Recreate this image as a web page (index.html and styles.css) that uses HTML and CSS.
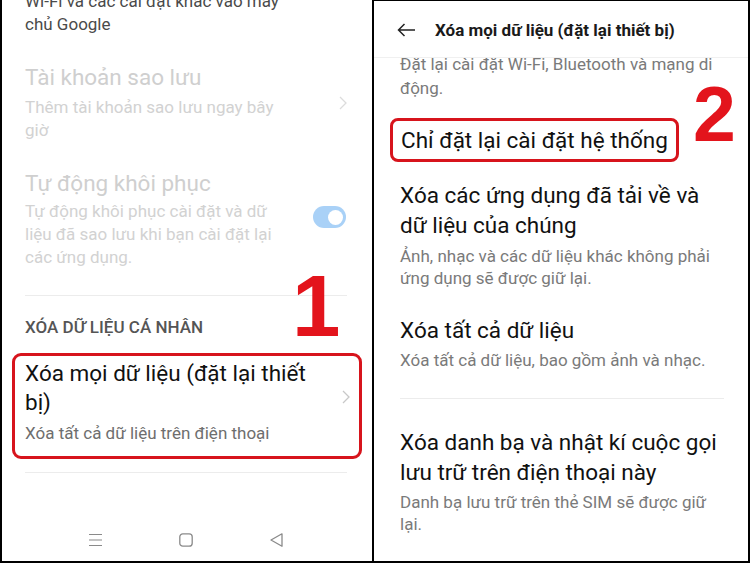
FILE: index.html
```html
<!DOCTYPE html>
<html lang="vi">
<head>
<meta charset="utf-8">
<link rel="stylesheet" href="styles.css">
</head>
<body>
<div class="screen">
  <section class="panel left">
    <p class="cut">Wi-Fi và các cài đặt khác vào máy<br>chủ Google</p>

    <div class="item disabled first">
      <div class="text">
        <div class="title">Tài khoản sao lưu</div>
        <div class="sub">Thêm tài khoản sao lưu ngay bây<br>giờ</div>
      </div>
      <svg class="chev" width="8" height="14" viewBox="0 0 8 14"><path d="M1 1 L7 7 L1 13" fill="none" stroke="#dcdcdc" stroke-width="1.3"/></svg>
    </div>

    <div class="item disabled second">
      <div class="text">
        <div class="title">Tự động khôi phục</div>
        <div class="sub">Tự động khôi phục cài đặt và dữ<br>liệu đã sao lưu khi bạn cài đặt lại<br>các ứng dụng.</div>
      </div>
      <div class="toggle"><span class="knob"></span></div>
    </div>

    <hr class="divider d1">
    <div class="section-head">XÓA DỮ LIỆU CÁ NHÂN</div>

    <div class="item boxed">
      <div class="text">
        <div class="title">Xóa mọi dữ liệu (đặt lại thiết<br>bị)</div>
        <div class="sub">Xóa tất cả dữ liệu trên điện thoại</div>
      </div>
      <svg class="chev" width="8" height="14" viewBox="0 0 8 14"><path d="M1 1 L7 7 L1 13" fill="none" stroke="#c8c8c8" stroke-width="1.3"/></svg>
    </div>
    <hr class="divider d2">

    <nav class="navbar">
      <svg width="13" height="14" viewBox="0 0 13 14"><path d="M0 1.5H13M0 7H13M0 12.5H13" stroke="#8a8a8a" stroke-width="1.2"/></svg>
      <svg width="14" height="14" viewBox="0 0 14 14"><rect x="0.8" y="0.8" width="12.4" height="12.4" rx="3" fill="none" stroke="#8a8a8a" stroke-width="1.3"/></svg>
      <svg width="13" height="14" viewBox="0 0 13 14"><path d="M12 0.8 L1 7 L12 13.2 Z" fill="none" stroke="#8a8a8a" stroke-width="1.3" stroke-linejoin="round"/></svg>
    </nav>

    <span class="step step1">1</span>
  </section>

  <section class="panel right">
    <header class="appbar">
      <svg class="back" width="19" height="14" viewBox="0 0 19 14"><path d="M18 7H1.5M7.5 1L1.5 7L7.5 13" fill="none" stroke="#222" stroke-width="1.5"/></svg>
      <h1>Xóa mọi dữ liệu (đặt lại thiết bị)</h1>
    </header>
    <div class="body">
      <p class="r-cut">Đặt lại cài đặt Wi-Fi, Bluetooth và mạng di<br>động.</p>

      <div class="ritem ritem-box">
        <span class="rtitle boxtitle">Chỉ đặt lại cài đặt hệ thống</span>
      </div>

      <div class="ritem r2">
        <div class="rtitle">Xóa các ứng dụng đã tải về và<br>dữ liệu của chúng</div>
        <div class="rsub">Ảnh, nhạc và các dữ liệu khác không phải<br>ứng dụng sẽ được giữ lại.</div>
      </div>

      <div class="ritem r3">
        <div class="rtitle">Xóa tất cả dữ liệu</div>
        <div class="rsub">Xóa tất cả dữ liệu, bao gồm ảnh và nhạc.</div>
      </div>

      <hr class="rdivider">

      <div class="ritem r4">
        <div class="rtitle">Xóa danh bạ và nhật kí cuộc gọi<br>lưu trữ trên điện thoại này</div>
        <div class="rsub">Danh bạ lưu trữ trên thẻ SIM sẽ được giữ<br>lại.</div>
      </div>
    </div>
    <span class="step step2">2</span>
  </section>
</div>
</body>
</html>
```

FILE: styles.css
```css
* { box-sizing: border-box; }
html, body { margin: 0; padding: 0; background: #fff; }
body { font-family: Roboto, "Noto Sans", "Liberation Sans", sans-serif; }

.screen {
  display: flex;
  width: 750px;
  height: 563px;
  border-bottom: 2px solid #000;
  overflow: hidden;
}

.panel { position: relative; height: 100%; overflow: hidden; }
.left {
  width: 374px;
  border-left: 2px solid #000;
  border-right: 2px solid #000;
  padding: 0 23px 0 23px;
  display: flex;
  flex-direction: column;
}
.right {
  flex: 1;
  border-top: 1px solid #000;
  border-right: 2px solid #000;
  display: flex;
  flex-direction: column;
}

p { margin: 0; }

/* left panel */
.cut {
  margin-top: -10px;
  font-size: 17px;
  line-height: 23px;
  color: #4a4a4a;
}
.item { display: flex; align-items: center; }
.item .text { flex: 1; white-space: nowrap; }
.item .title { font-size: 22.5px; line-height: 28px; color: #1a1a1a; }
.item .sub { font-size: 17px; line-height: 23px; color: #777; margin-top: 5px; }
.item.disabled .title { color: #cfcfcf; }
.item.disabled .sub { color: #d2d2d2; }
.item.first { margin-top: 27px; }
.item.second { margin-top: 27px; }
.item.second .sub { margin-top: 3px; }
.chev { flex: none; margin-right: 2px; }

.toggle {
  flex: none;
  width: 33px;
  height: 22px;
  border-radius: 11px;
  background: #a9d1f7;
  display: flex;
  align-items: center;
  justify-content: flex-end;
  padding-right: 3px;
  margin-right: 3px;
  margin-bottom: 4px;
}
.knob { width: 15px; height: 15px; border-radius: 50%; background: #fff; }

.divider { border: 0; border-top: 1px solid #ececec; margin: 0 2px 0 0; height: 0; }
.d1 { margin-top: 26px; }
.section-head {
  margin-top: 21px;
  font-size: 17px;
  line-height: 20px;
  font-weight: 500;
  color: #555;
}

.item.boxed {
  margin: 16px -13px 0 -13px;
  border: 3px solid #d7141c;
  border-radius: 9px;
  padding: 3px 7px 11px 10px;
}
.item.boxed .sub { margin-top: 5px; color: #6e6e6e; }
.item.boxed .title { line-height: 29px; color: #111; }
.item.boxed .chev { margin-top: -10px; }
.d2 { margin-top: 13px; }

.navbar {
  margin-top: auto;
  margin-bottom: 14px;
  display: flex;
  justify-content: center;
  gap: 77px;
  padding-right: 3px;
}

.step {
  position: absolute;
  font-family: "Liberation Sans", Arial, sans-serif;
  font-weight: bold;
  color: #e3141c;
  line-height: 1;
}
.step1 { font-size: 87px; left: 290px; top: 262px; }
.step2 { font-size: 77px; left: 319px; top: 75px; }

/* right panel */
.appbar {
  flex: none;
  height: 57px;
  border-bottom: 1px solid #f0f0f0;
  display: flex;
  align-items: center;
  padding: 2px 0 0 23px;
  gap: 19px;
}
.appbar h1 {
  margin: 0;
  font-size: 17px;
  font-weight: 700;
  color: #1a1a1a;
  white-space: nowrap;
}
.body { flex: 1; overflow: hidden; padding: 0 8px 0 26px; white-space: nowrap; }
.r-cut {
  margin-top: -6px;
  font-size: 17px;
  line-height: 24px;
  color: #7a7a7a;
}
.rtitle { font-size: 22.5px; line-height: 30px; color: #111; }
.rsub { font-size: 17px; line-height: 22px; color: #7a7a7a; margin-top: 5px; }
.ritem-box { margin-top: 18px; margin-left: -10px; }
.boxtitle {
  display: inline-block;
  border: 3px solid #d7141c;
  border-radius: 8px;
  padding: 4px 8px 4px 8px;
}
.r2 { margin-top: 18px; }
.r3 { margin-top: 26px; }
.r3 .rsub { margin-top: 4px; }
.rdivider { border: 0; border-top: 1px solid #ececec; margin: 27px 16px 0 0; height: 0; }
.r4 { margin-top: 28px; }
.r4 .rsub { margin-top: 4px; }
```
